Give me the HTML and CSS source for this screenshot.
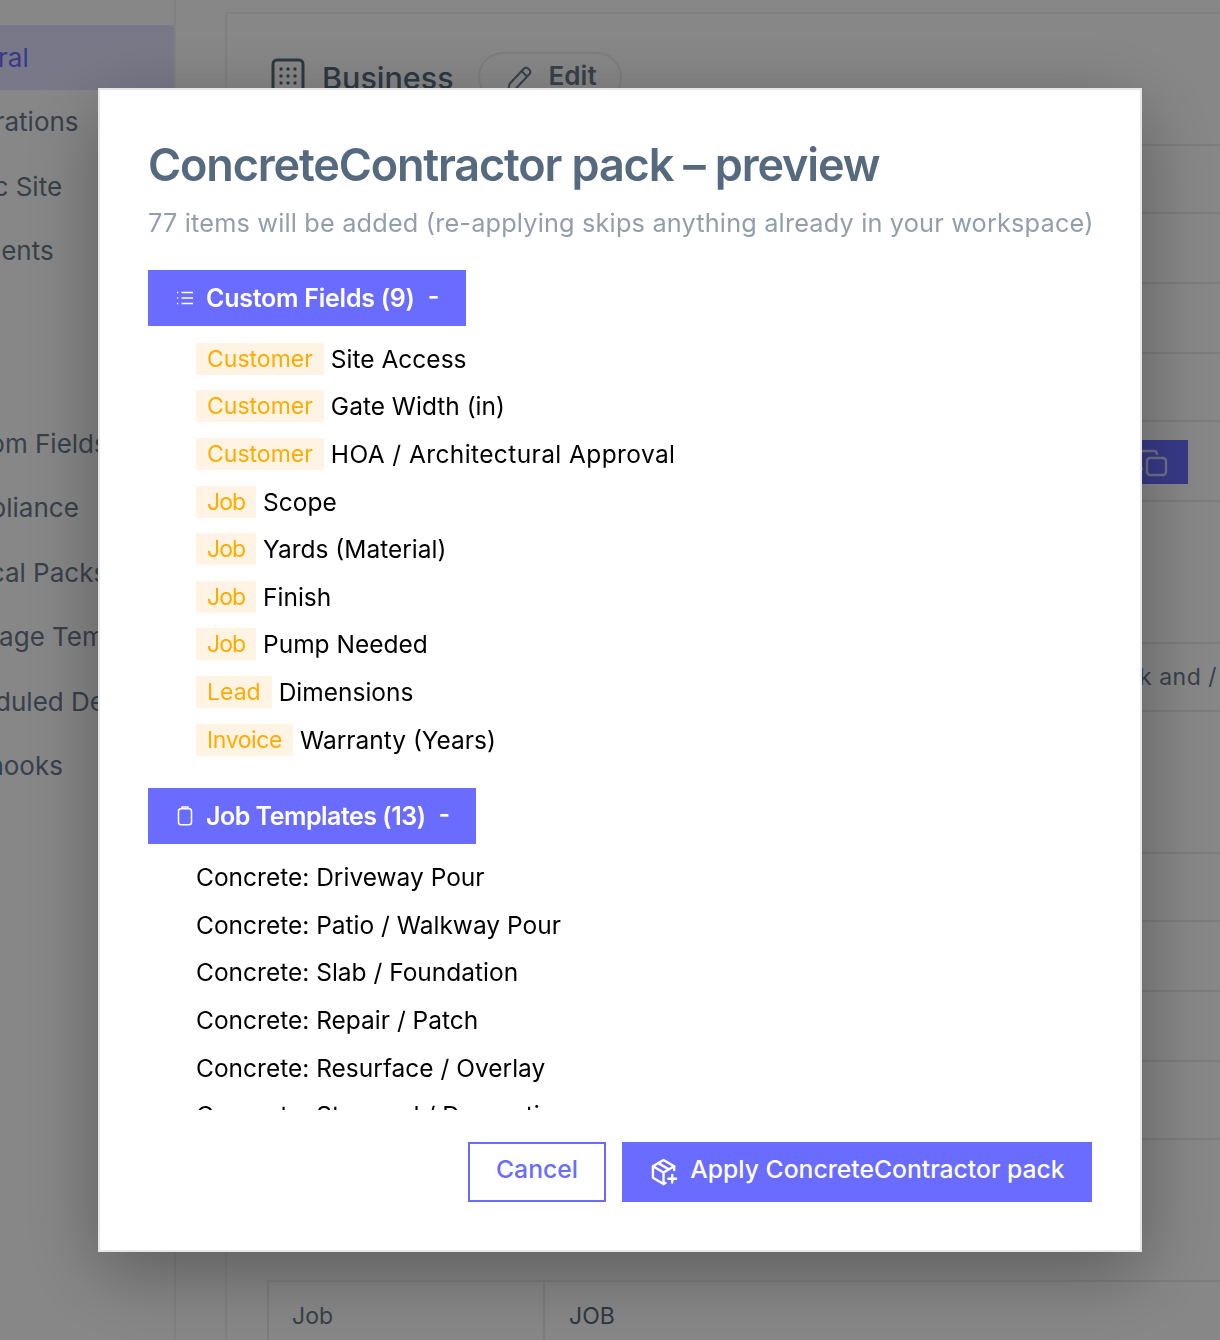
FILE: index.html
```html
<!DOCTYPE html>
<html lang="en">
<head>
<meta charset="utf-8">
<title>Settings</title>
<link rel="stylesheet" href="styles.css">
</head>
<body>
<div class="page">
  <nav class="sidebar">
    <a class="nav-item active">General</a>
    <a class="nav-item">Integrations</a>
    <a class="nav-item">Public Site</a>
    <a class="nav-item">Payments</a>
    <div class="nav-gap"></div>
    <a class="nav-item">Custom Fields</a>
    <a class="nav-item">Compliance</a>
    <a class="nav-item">Vertical Packs</a>
    <a class="nav-item">Message Templates</a>
    <a class="nav-item">Scheduled Delivery</a>
    <a class="nav-item">Webhooks</a>
  </nav>
  <main class="card">
    <header class="card-head">
      <svg class="building" viewBox="0 0 34 40" fill="none" stroke="currentColor" stroke-width="3"><rect x="2" y="2" width="30" height="36" rx="4"/><g fill="currentColor" stroke="none"><circle cx="10" cy="11" r="1.700"/><circle cx="17" cy="11" r="1.700"/><circle cx="24" cy="11" r="1.700"/><circle cx="10" cy="18" r="1.700"/><circle cx="17" cy="18" r="1.700"/><circle cx="24" cy="18" r="1.700"/><circle cx="10" cy="25" r="1.700"/><circle cx="17" cy="25" r="1.700"/><circle cx="24" cy="25" r="1.700"/></g></svg>
      <h2 class="card-title">Business</h2>
      <button class="pill">
        <svg class="pencil" viewBox="0 0 28 28" fill="none" stroke="currentColor" stroke-width="2" stroke-linejoin="round"><path d="M3 26l1.500-7L19 3.500a2.800 2.800 0 0 1 4 0l1.500 1.500a2.800 2.800 0 0 1 0 4L10 24.500z"/><path d="M16.500 6l5.500 5.500"/></svg>
        Edit
      </button>
    </header>
    <div class="rows">
      <div class="row h68"></div>
      <div class="row h70"></div>
      <div class="row h70"></div>
      <div class="row h68"></div>
      <div class="row h80 action"><button class="copy"><svg viewBox="0 0 30 30" fill="none" stroke="currentColor" stroke-width="2.400"><rect x="9" y="10" width="19" height="17" rx="3"/><path d="M5 21a3 3 0 0 1-3-3V6a3 3 0 0 1 3-3h11a3 3 0 0 1 3 3v1"/></svg></button></div>
      <div class="row h142"></div>
      <div class="row h68 note"><span>Use this link on your Facebook and /</span></div>
      <div class="row h142"></div>
      <div class="row h68"></div>
      <div class="row h70"></div>
      <div class="row h70"></div>
      <div class="row h78"></div>
      <div class="row h142"></div>
      <div class="row last">
        <div class="cell-key">Job</div>
        <div class="cell-val">JOB</div>
      </div>
    </div>
  </main>
</div>

<div class="backdrop"></div>
<section class="modal">
  <h1 class="modal-title">ConcreteContractor pack – preview</h1>
  <p class="modal-sub">77 items will be added (re-applying skips anything already in your workspace)</p>
  <div class="modal-body">
    <div class="section-head sec-fields">
      <svg class="sec-icon" viewBox="0 0 20 20" fill="none" stroke="currentColor" stroke-width="1.300"><path d="M6.500 4.500H18M6.500 10H18M6.500 15.500H18"/><path d="M2 4.500h1.200M2 10h1.200M2 15.500h1.200"/></svg>
      <span>Custom Fields (9)</span>
      <span class="dash">-</span>
    </div>
    <ul class="items">
      <li><span class="tag">Customer</span>Site Access</li>
      <li><span class="tag">Customer</span>Gate Width (in)</li>
      <li><span class="tag">Customer</span><span class="wide">HOA / Architectural Approval</span></li>
      <li><span class="tag tag-job">Job</span>Scope</li>
      <li><span class="tag tag-job">Job</span>Yards (Material)</li>
      <li><span class="tag tag-job">Job</span>Finish</li>
      <li><span class="tag tag-job">Job</span>Pump Needed</li>
      <li><span class="tag">Lead</span>Dimensions</li>
      <li><span class="tag tag-inv">Invoice</span>Warranty (Years)</li>
    </ul>
    <div class="section-head sec-jobs">
      <svg class="sec-icon clip" viewBox="0 0 20 20" fill="none" stroke="currentColor" stroke-width="1.500"><rect x="3.500" y="2.800" width="13" height="16" rx="2.500"/><path d="M7 2.800V1h6v1.800"/></svg>
      <span>Job Templates (13)</span>
      <span class="dash">-</span>
    </div>
    <ul class="items">
      <li>Concrete: Driveway Pour</li>
      <li>Concrete: Patio / Walkway Pour</li>
      <li>Concrete: Slab / Foundation</li>
      <li>Concrete: Repair / Patch</li>
      <li>Concrete: Resurface / Overlay</li>
      <li>Concrete: Stamped / Decorative</li>
      <li>Concrete: Footings</li>
    </ul>
  </div>
  <footer class="modal-foot">
    <button class="btn btn-outline"><span class="btn-label">Cancel</span></button>
    <button class="btn btn-primary">
      <svg class="pack" viewBox="0 0 28 30" fill="none" stroke="currentColor" stroke-width="2.500" stroke-linejoin="round" stroke-linecap="round"><path d="M24 13V9L13 2.500 2 9v12l11 6.500 2-1.200"/><path d="M2 9l11 6.500L24 9M13 15.500V27.500M7.500 5.800l11 6.500"/><path d="M22 18v8M18 22h8"/></svg>
      <span class="btn-label">Apply ConcreteContractor pack</span>
    </button>
  </footer>
</section>
</body>
</html>
```
FILE: styles.css
```css
* { box-sizing: border-box; }
html, body { margin: 0; height: 100%; overflow: hidden; }
body { font-family: Inter, "Liberation Sans", sans-serif; background: #fff; color: #000; }

.page { display: flex; width: 1220px; height: 1340px; overflow: hidden; background: #fdfdfd; }

.sidebar {
  flex: none;
  width: 243px;
  margin-left: -67px;
  padding-top: 25px;
  border-right: 2px solid #f2f2f2;
  display: flex;
  flex-direction: column;
}
.nav-item { display: flex; align-items: center; height: 64.500px; font-size: 26px; color: #697a8d; white-space: nowrap; }
.nav-item.active { background: #e2e2ff; color: #696cff; }
.nav-gap { height: 128px; }

.card {
  flex: none;
  width: 1010px;
  margin: 12px 0 0 49px;
  border: 2px solid #f0f0f0;
  border-bottom: 0;
}
.card-head { display: flex; align-items: flex-start; height: 130px; padding: 38px 0 0 44px; color: #566a7f; }
.building { width: 34px; height: 40px; margin-top: 6px; }
.card-title { margin: 4px 0 0 17px; font-size: 30.500px; font-weight: 500; line-height: 44px; }
.pill {
  display: flex;
  align-items: center;
  gap: 16px;
  width: 144px;
  height: 50px;
  margin-left: 24px;
  padding: 0 0 3px 25px;
  border: 2px solid #ebebeb;
  border-radius: 25px;
  background: transparent;
  font: 600 26px Inter, sans-serif;
  color: #697a8d;
}
.pencil { width: 28px; height: 28px; margin-top: 6px; }

.rows { display: flex; flex-direction: column; }
.row { border-top: 2px solid #e9e9e9; }
.h68 { height: 68px; }
.h70 { height: 70px; }
.h78 { height: 78px; }
.h80 { height: 80px; }
.h142 { height: 142px; }
.action { display: flex; justify-content: flex-end; align-items: flex-start; padding: 18px 45px 0 0; }
.copy { width: 80px; height: 44px; padding: 2px 0 0 30px; border: 0; background: #696cff; color: #fff; display: flex; align-items: center; }
.copy svg { width: 30px; height: 30px; opacity: .7; }
.note { display: flex; align-items: center; justify-content: flex-end; padding-right: 16px; font-size: 23px; letter-spacing: .5px; color: #697a8d; white-space: nowrap; }
.last { display: grid; grid-template-columns: 276px 1fr; margin-left: 40px; border-left: 2px solid #e9e9e9; height: 70px; font-size: 23px; color: #697a8d; }
.cell-key { padding: 20px 0 0 23px; border-right: 2px solid #e9e9e9; }
.cell-val { padding: 20px 0 0 24px; color: #566a7f; }

.backdrop { position: fixed; inset: 0; background: rgba(0, 0, 0, .465); }
.modal {
  position: fixed;
  left: 98px;
  top: 88px;
  width: 1044px;
  height: 1164px;
  padding: 48px;
  background: #fff;
  border: 2px solid #e4e6e8;
  box-shadow: 0 20px 70px rgba(0, 0, 0, .32);
  display: flex;
  flex-direction: column;
}
.modal-title { margin: 0; font-size: 45px; font-weight: 600; line-height: 54px; letter-spacing: -1.150px; color: #566a7f; white-space: nowrap; }
.modal-sub { margin: 12px 0 0; font-size: 25.300px; line-height: 38px; letter-spacing: .17px; color: #939eac; white-space: nowrap; }
.modal-body { flex: 1; min-height: 0; overflow: hidden; margin-top: 28px; }

.section-head {
  display: flex;
  align-items: center;
  height: 56px;
  padding: 0 0 0 27px;
  background: #696cff;
  color: #fff;
  font-size: 25px;
  font-weight: 600;
}
.sec-fields { width: 318px; letter-spacing: -.25px; }
.sec-jobs { width: 328px; letter-spacing: -.5px; }
.sec-icon { flex: none; width: 20px; height: 20px; margin-right: 11px; }
.clip { height: 22px; }
.dash { margin: -4px 0 0 13px; }

.items { list-style: none; margin: 0; padding: 9px 0 25px 48px; font-size: 24.500px; }
.items li { display: flex; align-items: center; height: 47.600px; white-space: nowrap; }
.wide { letter-spacing: .4px; }
.tag { display: inline-flex; align-items: center; height: 32px; margin-right: 7px; padding: 0 11px; background: #fff4e3; color: #ffab00; font-size: 23px; }
.tag-job { letter-spacing: -1px; }
.tag-inv { letter-spacing: -.4px; }

.modal-foot { display: flex; justify-content: flex-end; gap: 16px; margin-top: 32px; }
.btn { display: flex; align-items: center; justify-content: center; height: 60px; border: 2px solid #696cff; font: 500 24.700px Inter, sans-serif; }
.btn-label { margin-bottom: 6px; }
.btn-outline { width: 138px; background: #fff; color: #696cff; }
.btn-primary { width: 470px; padding-left: 8px; gap: 12px; background: #696cff; color: #fff; }
.pack { width: 27px; height: 30px; }
```
